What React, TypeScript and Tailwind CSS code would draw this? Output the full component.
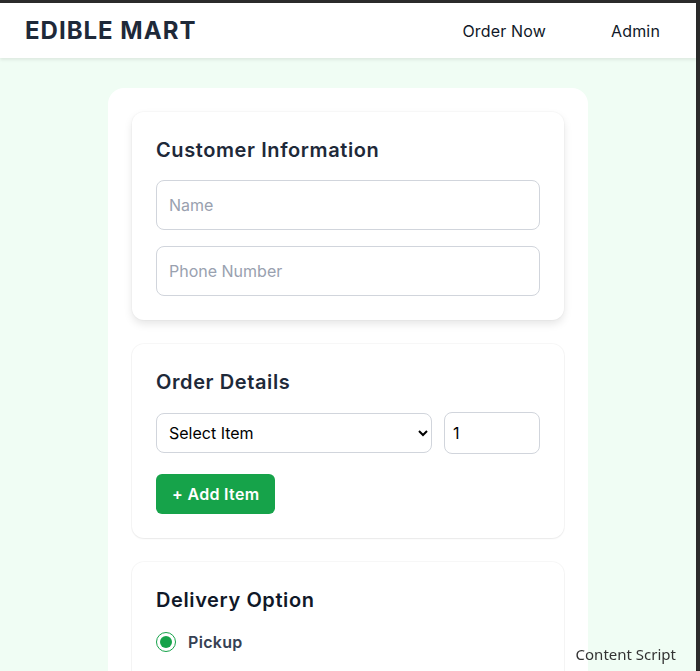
import React, { useState } from 'react';

const font = { fontFamily: 'Inter, "Noto Sans", sans-serif' };

const App: React.FC = () => {
  const [name, setName] = useState('');
  const [phone, setPhone] = useState('');
  const [qty, setQty] = useState('1');
  const [option, setOption] = useState('pickup');

  return (
    <div className="min-h-screen bg-[#2b2b2b] pt-[3px] pr-[4px]" style={font}>
      <div className="min-h-[668px] bg-[#f0fdf4]">
        {/* Header */}
        <header className="h-[55px] bg-white px-6 flex items-center justify-between shadow-[0_2px_3px_rgba(0,0,0,0.08)]">
          <h1 className="pl-[1px] text-2xl font-bold tracking-[1px] text-gray-800">EDIBLE MART</h1>
          <nav className="flex items-center gap-[41px] text-base text-gray-900 tracking-[0.01em]">
            <a href="#" className="px-3">Order Now</a>
            <a href="#" className="px-3">Admin</a>
          </nav>
        </header>

        {/* Form */}
        <main className="mt-[30px] mx-auto w-[480px] bg-white rounded-2xl p-6 flex flex-col gap-6">
          <section className="bg-white rounded-xl p-6 shadow-[0_0_0_1px_rgba(0,0,0,0.02),0_4px_8px_rgba(0,0,0,0.1)]">
            <h2 className="text-xl font-semibold tracking-[0.03em] text-gray-800 mb-4">Customer Information</h2>
            <div className="flex flex-col gap-4">
              <input
                value={name}
                onChange={(e) => setName(e.target.value)}
                placeholder="Name"
                className="h-[50px] w-full px-3 rounded-lg border border-gray-300 text-base placeholder:text-gray-400 outline-none"
              />
              <input
                value={phone}
                onChange={(e) => setPhone(e.target.value)}
                placeholder="Phone Number"
                className="h-[50px] w-full px-3 rounded-lg border border-gray-300 text-base placeholder:text-gray-400 outline-none"
              />
            </div>
          </section>

          <section className="bg-white rounded-xl p-6 shadow-[0_0_0_1px_rgba(0,0,0,0.03),0_1px_2px_rgba(0,0,0,0.06)]">
            <h2 className="text-xl font-semibold tracking-[0.03em] text-gray-800 mb-4">Order Details</h2>
            <div className="flex items-center gap-3">
              <select className="h-10 flex-1 pl-2 pr-2 rounded-lg border border-gray-300 bg-white text-base text-black outline-none">
                <option>Select Item</option>
              </select>
              <input
                type="number"
                value={qty}
                onChange={(e) => setQty(e.target.value)}
                className="h-[42px] w-24 px-2 rounded-lg border border-gray-300 text-base text-black outline-none"
              />
            </div>
            <button className="mt-5 h-10 px-4 rounded-md bg-[#16a34a] text-white font-semibold text-base tracking-[0.02em]">
              + Add Item
            </button>
          </section>

          <section className="bg-white rounded-xl p-6 shadow-[0_0_0_1px_rgba(0,0,0,0.03),0_1px_2px_rgba(0,0,0,0.06)]">
            <h2 className="text-xl font-semibold tracking-[0.03em] text-gray-900 mb-4">Delivery Option</h2>
            <label className="flex items-center gap-3 cursor-pointer" onClick={() => setOption('pickup')}>
              <span className="w-5 h-5 rounded-full border-[1.5px] border-[#16a34a] flex items-center justify-center">
                {option === 'pickup' && <span className="w-3 h-3 rounded-full bg-[#16a34a]" />}
              </span>
              <span className="font-semibold text-gray-700 tracking-[0.02em]">Pickup</span>
            </label>
            <label className="mt-8 flex items-center gap-3 cursor-pointer" onClick={() => setOption('delivery')}>
              <span className="w-5 h-5 rounded-full border-[1.5px] border-gray-400 flex items-center justify-center">
                {option === 'delivery' && <span className="w-3 h-3 rounded-full bg-[#16a34a]" />}
              </span>
              <span className="font-semibold text-gray-700">Home Delivery</span>
            </label>
          </section>
        </main>
      </div>

      <div
        className="fixed right-[24px] bottom-[6px] text-[15px] text-[#333]"
        style={{ fontFamily: '"Noto Sans", sans-serif' }}
      >
        Content Script
      </div>
    </div>
  );
};

export default App;
